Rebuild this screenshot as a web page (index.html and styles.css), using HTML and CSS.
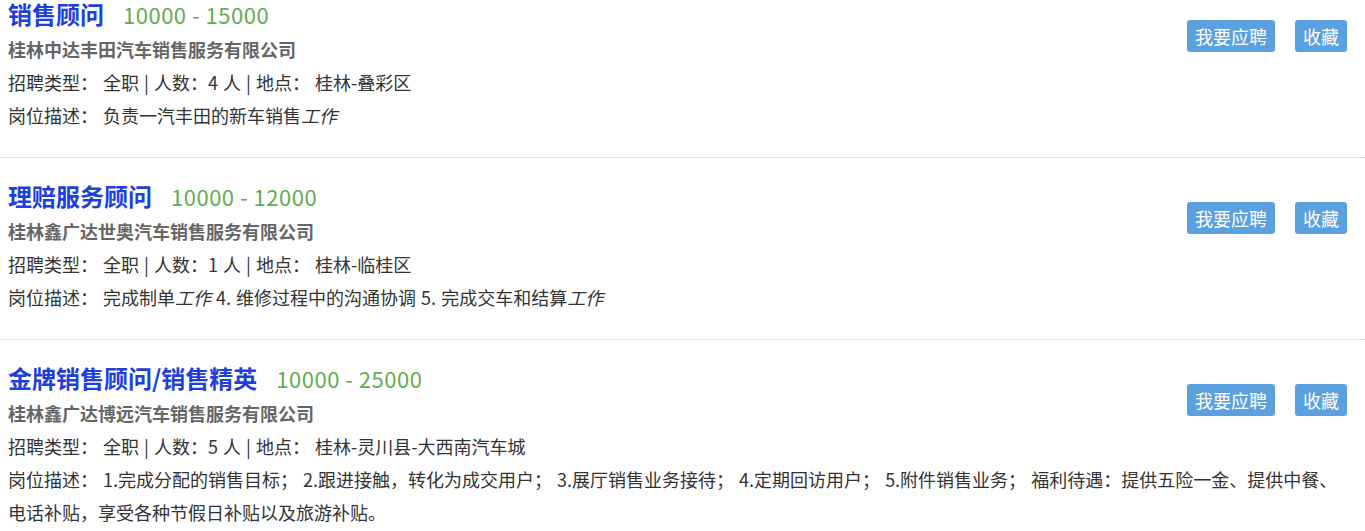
FILE: index.html
```html
<!DOCTYPE html>
<html>
<head>
  <meta charset="utf-8">
  <title>职位列表</title>
  <link rel="stylesheet" href="styles.css">
</head>
<body>
<div class="job-list">
  <div class="job-item">
    <div class="job-actions">
      <a class="btn">我要应聘</a>
      <a class="btn">收藏</a>
    </div>
    <div class="job-head"><span class="job-title">销售顾问</span><span class="job-salary">10000 - 15000</span></div>
    <div class="job-company">桂林中达丰田汽车销售服务有限公司</div>
    <div class="job-line">招聘类型：&nbsp;全职 | 人数：4 人 | 地点：&nbsp;桂林-叠彩区</div>
    <div class="job-line">岗位描述：&nbsp;负责一汽丰田的新车销售<em>工作</em></div>
  </div>
  <div class="job-item">
    <div class="job-actions">
      <a class="btn">我要应聘</a>
      <a class="btn">收藏</a>
    </div>
    <div class="job-head"><span class="job-title">理赔服务顾问</span><span class="job-salary">10000 - 12000</span></div>
    <div class="job-company">桂林鑫广达世奥汽车销售服务有限公司</div>
    <div class="job-line">招聘类型：&nbsp;全职 | 人数：1 人 | 地点：&nbsp;桂林-临桂区</div>
    <div class="job-line">岗位描述：&nbsp;完成制单<em>工作</em> 4. 维修过程中的沟通协调 5. 完成交车和结算<em>工作</em></div>
  </div>
  <div class="job-item">
    <div class="job-actions">
      <a class="btn">我要应聘</a>
      <a class="btn">收藏</a>
    </div>
    <div class="job-head"><span class="job-title">金牌销售顾问/销售精英</span><span class="job-salary">10000 - 25000</span></div>
    <div class="job-company">桂林鑫广达博远汽车销售服务有限公司</div>
    <div class="job-line">招聘类型：&nbsp;全职 | 人数：5 人 | 地点：&nbsp;桂林-灵川县-大西南汽车城</div>
    <div class="job-line">岗位描述：&nbsp;1.完成分配的销售目标；&nbsp;2.跟进接触，转化为成交用户；&nbsp;3.展厅销售业务接待；&nbsp;4.定期回访用户；&nbsp;5.附件销售业务；&nbsp;福利待遇：提供五险一金、提供中餐、电话补贴，享受各种节假日补贴以及旅游补贴。</div>
  </div>
</div>
</body>
</html>
```

FILE: styles.css
```css
body { margin: 0; font-family: "Microsoft YaHei", "Noto Sans CJK SC", sans-serif; color: #333; background: #fff; }
.job-item { padding: 24px 18px 25px 8px; border-bottom: 1px dotted #ccc; font-size: 18px; line-height: 33px; }
.job-item:first-child { padding-top: 0; }
.job-actions { float: right; display: flex; gap: 20px; margin-top: 20px; }
.btn { display: block; height: 32px; line-height: 32px; padding: 0 8px; background: #5ba1e0; color: #fff; border-radius: 3px; font-size: 18px; cursor: pointer; }
.job-head { height: 33px; }
.job-title { font-size: 24px; line-height: 1; font-weight: bold; color: #1d3fe0; }
.job-salary { font-size: 22px; line-height: 1; letter-spacing: 0.5px; color: #5fae4f; margin-left: 19px; }
.job-company { font-weight: bold; color: #666; }
.job-line { word-spacing: 1px; }
.job-line em { font-style: italic; }
```
